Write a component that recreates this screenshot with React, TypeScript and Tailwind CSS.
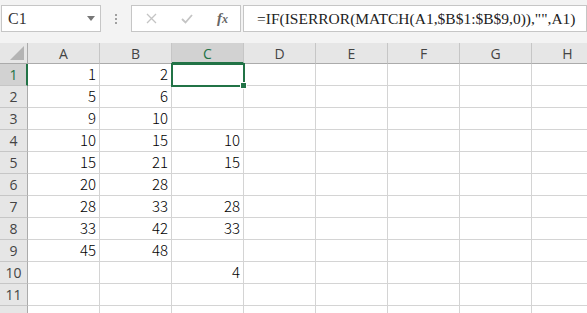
// Spreadsheet view — Excel-style formula bar and grid with a selected C1 cell.

const COLS = ["A", "B", "C", "D", "E", "F", "G", "H"];

const DATA: Record<number, (string | number)[]> = {
  1: [1, 2, ""],
  2: [5, 6, ""],
  3: [9, 10, ""],
  4: [10, 15, 10],
  5: [15, 21, 15],
  6: [20, 28, ""],
  7: [28, 33, 28],
  8: [33, 42, 33],
  9: [45, 48, ""],
  10: ["", "", 4],
  11: ["", "", ""],
};

function FormulaBar() {
  return (
    <div className="flex h-[43px] items-start bg-[#f3f3f3] pt-[5px]">
      {/* Name box */}
      <div className="ml-[1px] flex h-[27px] w-[100px] items-center justify-between border border-[#c6c6c6] bg-white pl-[6px] pr-[5px]">
        <span className="text-[16px] text-[#333]" style={{ fontFamily: '"Liberation Serif", serif' }}>
          C1
        </span>
        <svg width="8" height="5" viewBox="0 0 8 5">
          <path d="M0 0h8L4 5z" fill="#777" />
        </svg>
      </div>
      {/* grip dots */}
      <div className="ml-[14px] mt-[9px] flex w-[3px] flex-col gap-[2px]">
        <span className="h-[2px] w-[2px] bg-[#a0a0a0]" />
        <span className="h-[2px] w-[2px] bg-[#a0a0a0]" />
        <span className="h-[2px] w-[2px] bg-[#a0a0a0]" />
      </div>
      {/* cancel / enter / fx */}
      <div className="ml-[13px] flex h-[27px] w-[110px] items-center border border-[#c6c6c6] bg-white">
        <svg className="ml-[14px]" width="11" height="11" viewBox="0 0 11 11">
          <path d="M1 1l9 9M10 1l-9 9" stroke="#c4c4c4" strokeWidth="1.3" />
        </svg>
        <svg className="ml-[24px]" width="12" height="10" viewBox="0 0 12 10">
          <path d="M1 5l3.5 3.5L11 1" stroke="#c4c4c4" strokeWidth="1.8" fill="none" />
        </svg>
        <span
          className="ml-[24px] text-[15px] italic font-bold text-[#666]"
          style={{ fontFamily: '"Liberation Serif", serif' }}
        >
          f<span className="text-[12px]">x</span>
        </span>
      </div>
      {/* formula input */}
      <div className="ml-[2px] flex h-[27px] flex-1 items-center border border-[#c6c6c6] bg-white pl-[13px]">
        <span
          className="whitespace-nowrap text-[15.5px] text-[#222]"
          style={{ fontFamily: '"Liberation Serif", serif' }}
        >
          =IF(ISERROR(MATCH(A1,$B$1:$B$9,0)),"",A1)
        </span>
      </div>
    </div>
  );
}

function HeaderRow() {
  return (
    <div className="flex h-[21px] bg-[#e6e6e6]">
      <div className="relative w-[28px] shrink-0 border-r border-b border-[#ababab]">
        <svg className="absolute bottom-[3px] right-[3px]" width="14" height="14" viewBox="0 0 14 14">
          <path d="M14 0v14H0z" fill="#b4b4b4" />
        </svg>
      </div>
      {COLS.map((c) => (
        <div
          key={c}
          className={
            c === "C"
              ? "flex w-[72px] shrink-0 items-center justify-center border-r border-b-2 border-r-[#c6c6c6] border-b-[#217346] bg-[#d2d2d2] pt-[2px] text-[14px] text-[#217346]"
              : "flex w-[72px] shrink-0 items-center justify-center border-r border-b border-r-[#c6c6c6] border-b-[#ababab] text-[14px] text-[#444]"
          }
          style={{ fontFamily: '"Open Sans", sans-serif' }}
        >
          {c}
        </div>
      ))}
    </div>
  );
}

function Row({ n, label = true }: { n: number; label?: boolean }) {
  const values = DATA[n] ?? [];
  return (
    <div className="flex h-[22px]">
      <div
        className={
          n === 1
            ? "flex w-[28px] shrink-0 items-center justify-center border-r-2 border-b border-r-[#217346] border-b-[#c6c6c6] bg-[#d2d2d2] pl-[1px] text-[14px] text-[#217346]"
            : "flex w-[28px] shrink-0 items-center justify-center border-r border-b border-r-[#ababab] border-b-[#c6c6c6] bg-[#e6e6e6] text-[14px] text-[#444]"
        }
        style={{ fontFamily: '"Open Sans", sans-serif' }}
      >
        {label ? n : ""}
      </div>
      {COLS.map((c, i) => (
        <div
          key={c}
          className="relative flex w-[72px] shrink-0 items-end justify-end border-r border-b border-[#d4d4d4] pb-[1px] pr-[3px] text-[15px] font-light leading-[20px] text-black"
          style={{ fontFamily: '"Noto Sans CJK TC", "Liberation Sans", sans-serif' }}
        >
          {values[i] ?? ""}
          {n === 1 && c === "C" && (
            <>
              <div className="absolute -left-[1px] -top-[1px] z-10 h-[24px] w-[74px] border-2 border-[#217346]" />
              <div className="absolute -bottom-[4px] -right-[4px] z-20 h-[7px] w-[7px] border border-white bg-[#217346]" />
            </>
          )}
        </div>
      ))}
    </div>
  );
}

export default function App() {
  return (
    <div className="h-[313px] w-[587px] overflow-hidden bg-white">
      <FormulaBar />
      <HeaderRow />
      {Array.from({ length: 11 }, (_, i) => (
        <Row key={i} n={i + 1} />
      ))}
      <Row n={12} label={false} />
    </div>
  );
}
